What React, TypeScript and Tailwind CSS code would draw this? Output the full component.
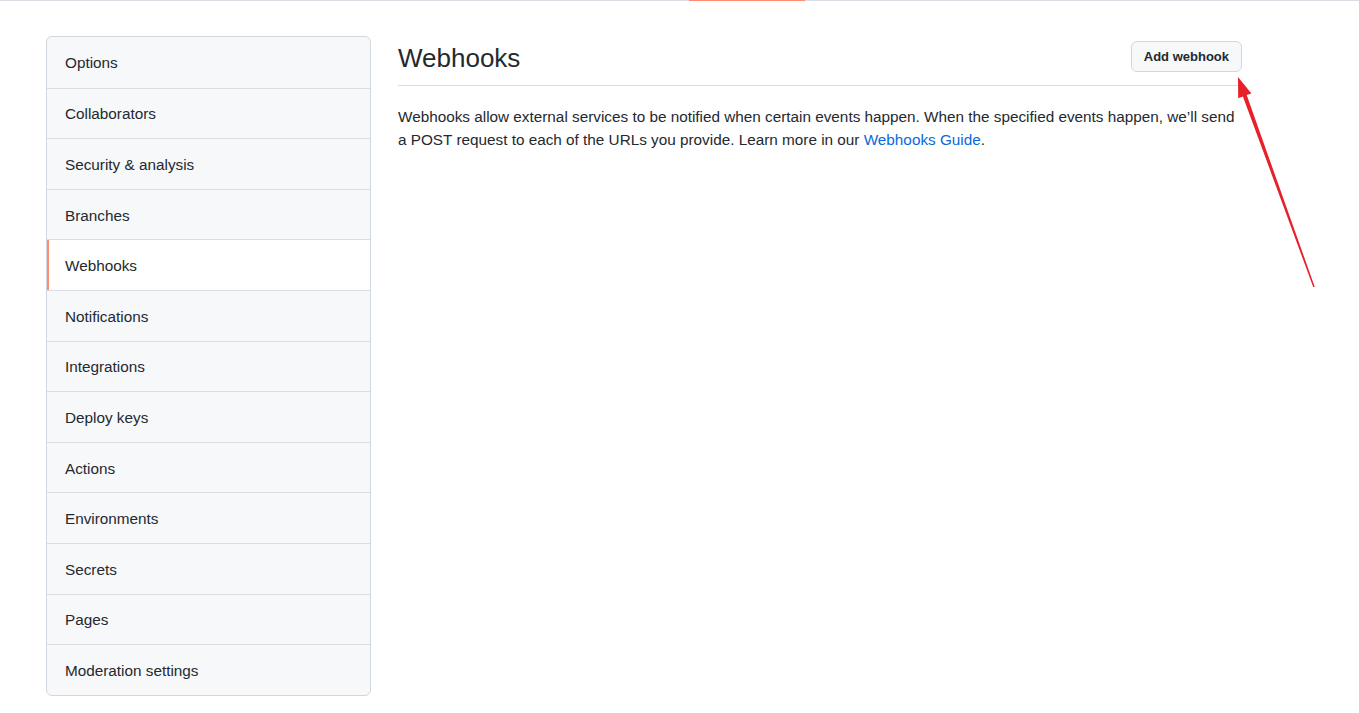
import React from "react";

const items = [
  "Options",
  "Collaborators",
  "Security & analysis",
  "Branches",
  "Webhooks",
  "Notifications",
  "Integrations",
  "Deploy keys",
  "Actions",
  "Environments",
  "Secrets",
  "Pages",
  "Moderation settings",
];

function SideMenu() {
  return (
    <nav className="w-[325px] shrink-0 rounded-md border border-[#d0d7de] bg-[#f6f8fa] overflow-hidden">
      {items.map((label, i) => {
        const active = label === "Webhooks";
        return (
          <div
            key={label}
            className={
              "relative flex items-center h-[50.6px] pl-[18px] pt-[3px] text-[15.3px] text-[#24292f] " +
              (i > 0 ? "border-t border-[#d8dee4] " : "") +
              (active ? "bg-white" : "")
            }
          >
            {active && <span className="absolute left-0 top-0 bottom-0 w-[2px] bg-[#fd8c73]" />}
            {label}
          </div>
        );
      })}
    </nav>
  );
}

function Arrow() {
  return (
    <svg
      className="absolute inset-0 pointer-events-none"
      width="1359"
      height="713"
      viewBox="0 0 1359 713"
    >
      <polygon
        fill="#e62129"
        points="1238,77 1251.4,93.4 1246.7,95.1 1314.7,286.8 1313.3,287.2 1242.9,96.5 1238.2,98.2"
      />
    </svg>
  );
}

export default function App() {
  return (
    <div className="relative min-h-screen bg-white font-['Liberation_Sans',Arial,sans-serif]">
      <div className="flex h-px">
        <div className="w-[689px] bg-[#d8dee4]" />
        <div className="w-[116px] bg-[#fd8c73]" />
        <div className="flex-1 bg-[#d8dee4]" />
      </div>

      <div className="flex gap-[27px] pl-[46px] pt-[35px]">
        <SideMenu />

        <main className="w-[844px]">
          <div className="flex h-[50px] items-center justify-between border-b border-[#d8dee4] pb-[8px]">
            <h1 className="pt-[3px] text-[26px] font-normal text-[#24292f]">Webhooks</h1>
            <button className="h-[31px] rounded-md border border-[#d0d7de] bg-[#f6f8fa] px-[12px] text-[13px] font-semibold text-[#24292f]">
              Add webhook
            </button>
          </div>
          <p className="mt-[19px] text-[15.3px] leading-[23px] text-[#24292f]">
            Webhooks allow external services to be notified when certain events happen. When the specified events
            happen, we’ll send a POST request to each of the URLs you provide. Learn more in our{" "}
            <a className="text-[#0969da]">Webhooks Guide</a>.
          </p>
        </main>
      </div>

      <Arrow />
    </div>
  );
}
